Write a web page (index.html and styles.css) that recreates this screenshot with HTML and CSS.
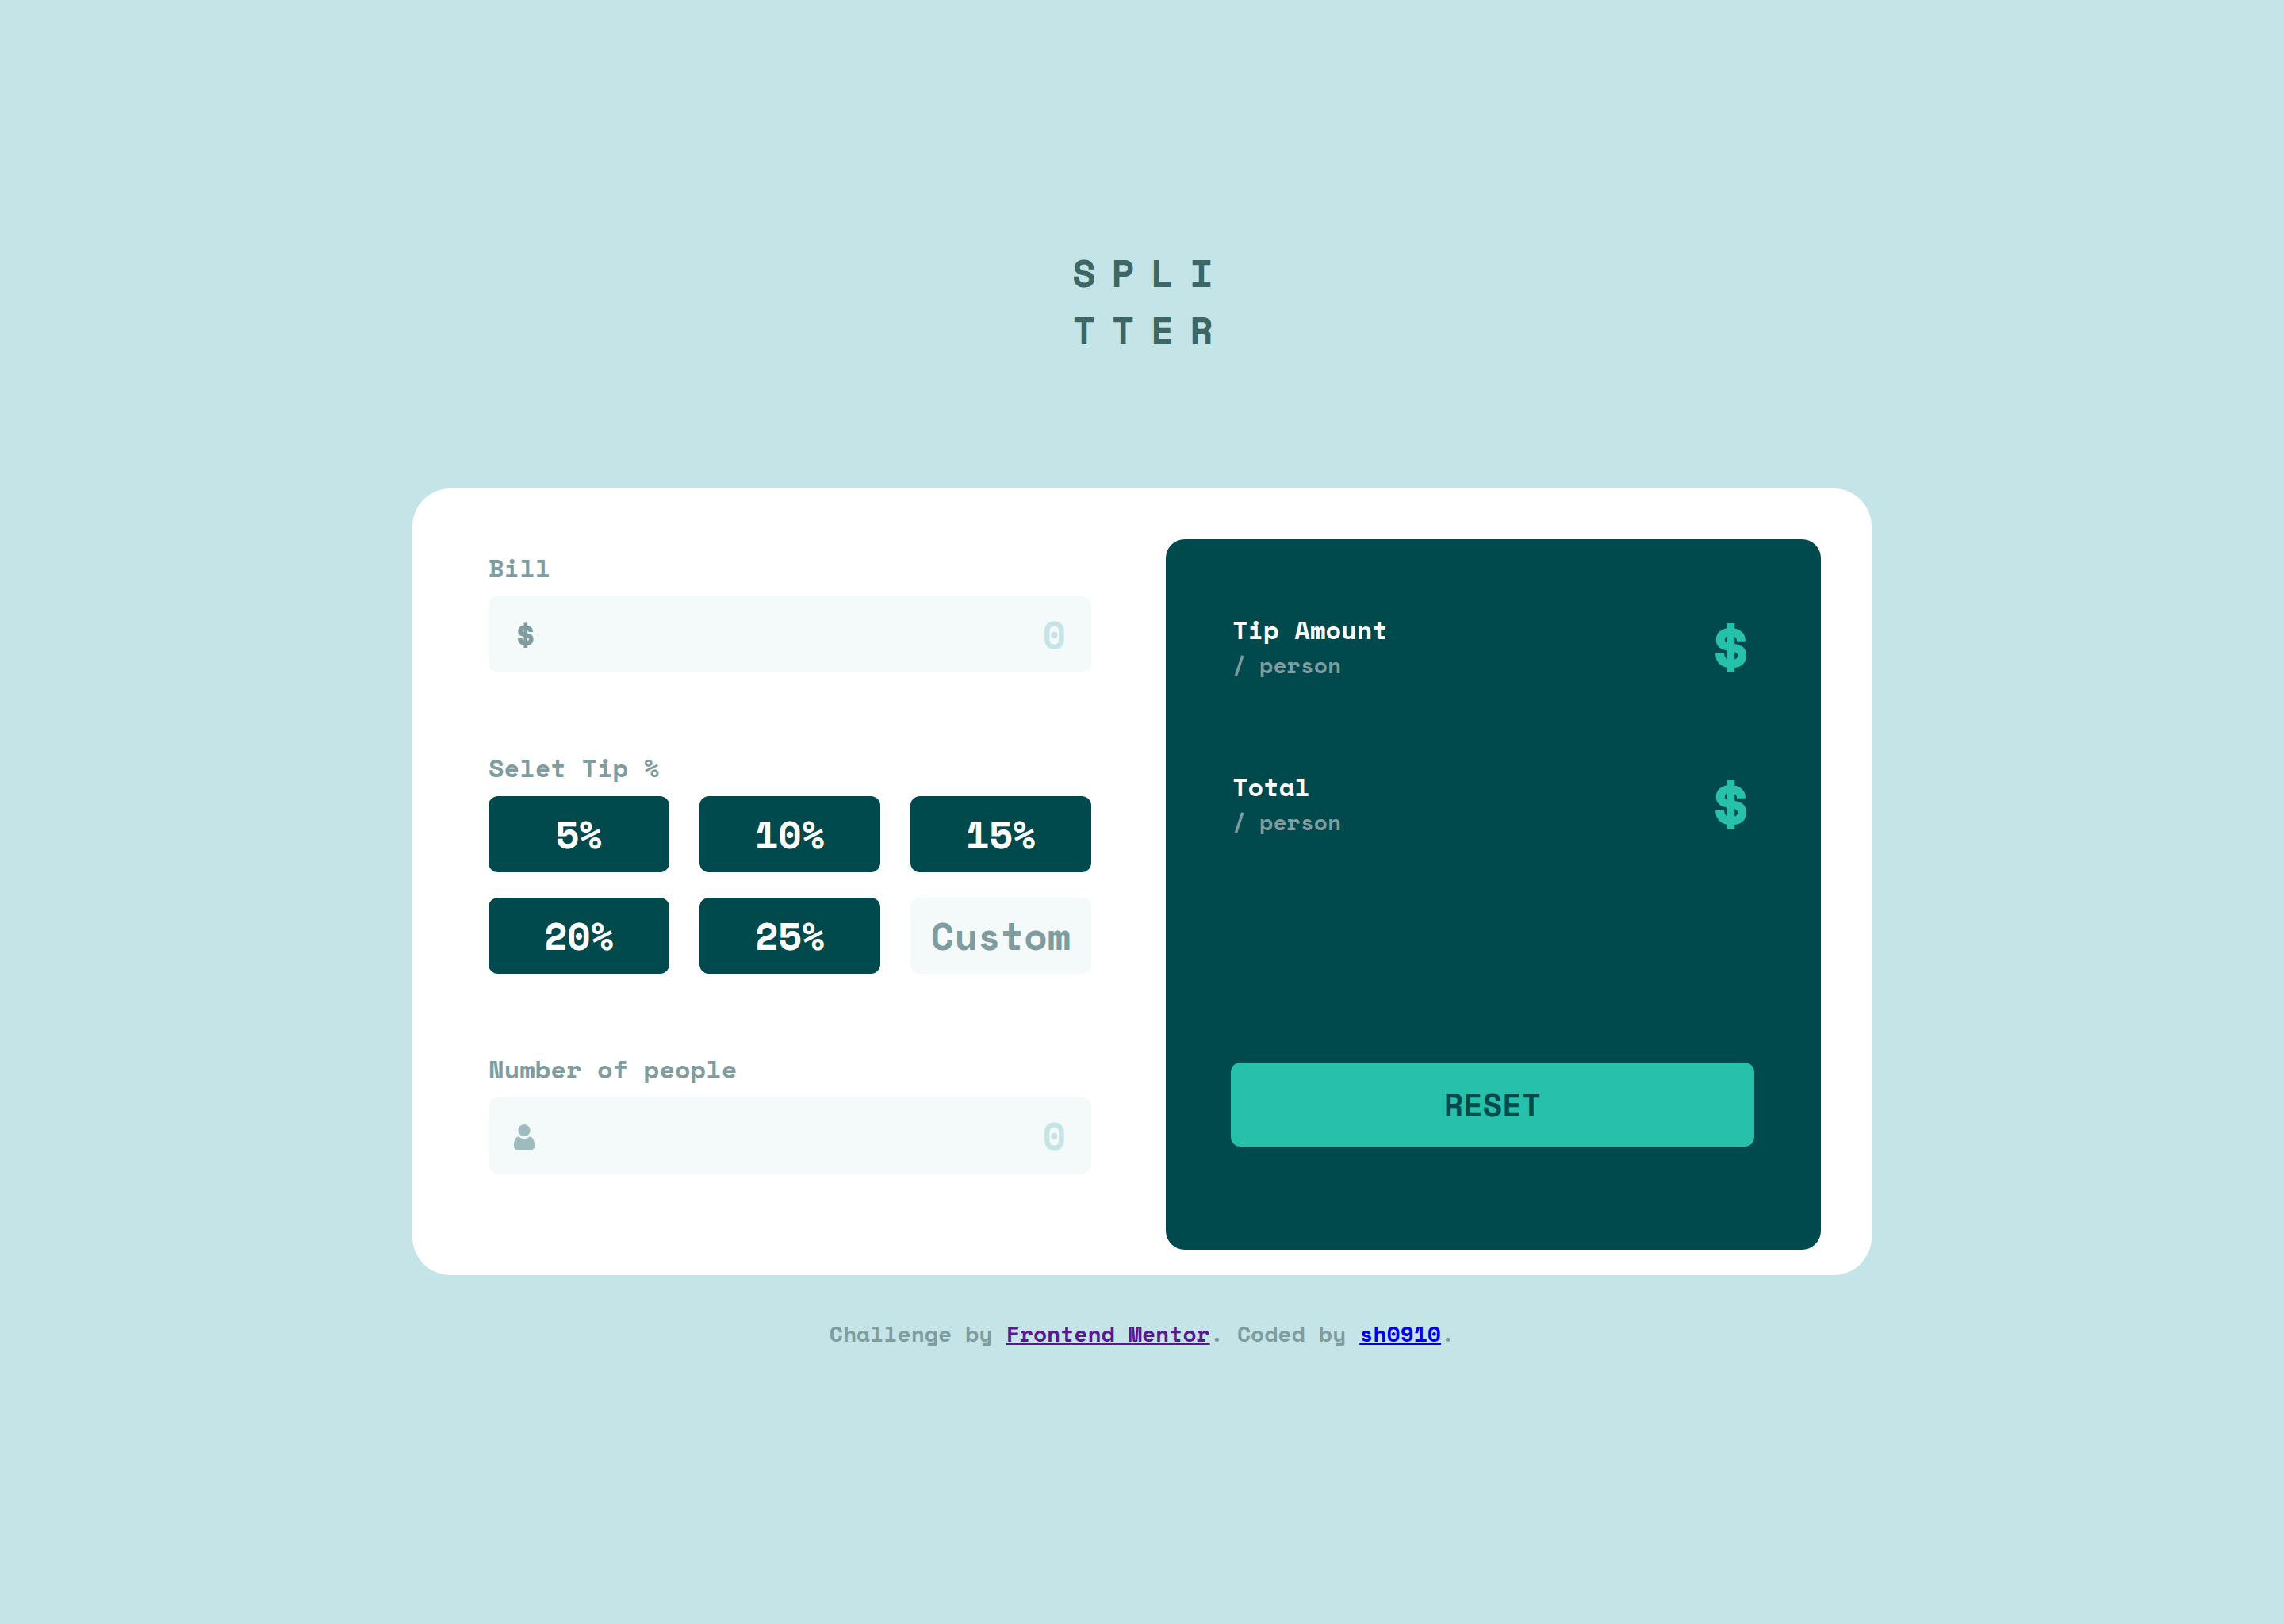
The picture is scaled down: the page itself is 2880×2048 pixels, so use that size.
FILE: index.html
```html
<!DOCTYPE html>
<html lang="en">
<head>
  <meta charset="utf-8">
  <meta name="viewport" content="width=device-width, initial-scale=1">
  <title>Tip calculator</title>
  <link rel="stylesheet" href="styles.css">
</head>
<body class="page">
  <h1 class="logo">SPLI<br>TTER</h1>

  <main class="card">
    <form class="form">
      <div class="group">
        <label class="label" for="bill">Bill</label>
        <div class="field">
          <span class="field-currency" aria-hidden="true">$</span>
          <input class="field-input" id="bill" type="text" inputmode="decimal" placeholder="0">
        </div>
      </div>

      <fieldset class="group">
        <legend class="label">Selet Tip %</legend>
        <div class="tips">
          <button class="tip" type="button">5%</button>
          <button class="tip" type="button">10%</button>
          <button class="tip" type="button">15%</button>
          <button class="tip" type="button">20%</button>
          <button class="tip" type="button">25%</button>
          <input class="tip tip-custom" type="text" inputmode="decimal" placeholder="Custom" aria-label="Custom tip">
        </div>
      </fieldset>

      <div class="group">
        <label class="label" for="people">Number of people</label>
        <div class="field">
          <svg class="field-icon" viewBox="0 0 26 36" aria-hidden="true">
            <circle cx="13" cy="11.600" r="7.600"/>
            <path d="M5.600 19.200C8 20.600 9.500 22.300 13 22.300S18 20.600 20.400 19.200C24.500 20.500 26 25.500 26 31C26 34.500 24.500 36 21.500 36H4.500C1.500 36 0 34.500 0 31C0 25.500 1.500 20.500 5.600 19.200Z"/>
          </svg>
          <input class="field-input" id="people" type="text" inputmode="numeric" placeholder="0">
        </div>
      </div>
    </form>

    <section class="panel">
      <div class="result">
        <div>
          <h2 class="result-title">Tip Amount</h2>
          <p class="result-note">/ person</p>
        </div>
        <output class="amount">$</output>
      </div>
      <div class="result">
        <div>
          <h2 class="result-title">Total</h2>
          <p class="result-note">/ person</p>
        </div>
        <output class="amount">$</output>
      </div>
      <button class="reset" type="button">RESET</button>
    </section>
  </main>

  <footer class="credits">
    Challenge by <a class="link-visited" href="#mentor">Frontend Mentor</a>. Coded by <a class="link" href="#author">sh0910</a>.
  </footer>
</body>
</html>
```
FILE: styles.css
```css
:root {
  --teal-dark: #00494d;
  --teal: #26c0ab;
  --gray: #7f9c9f;
  --pale: #c5e4e7;
  --field: #f4fafa;
}

* {
  box-sizing: border-box;
  margin: 0;
}

.page {
  min-height: 100vh;
  padding: 308px 32px 64px;
  display: flex;
  flex-direction: column;
  align-items: center;
  background: var(--pale);
  color: var(--gray);
  font-family: "Space Mono", "Liberation Mono", monospace;
  font-size: 32px;
  font-weight: 700;
}

.logo {
  margin-bottom: 164px;
  padding-left: 22px;
  color: #3d6666;
  font-size: 48px;
  line-height: 72px;
  letter-spacing: 20px;
}

.card {
  width: 100%;
  max-width: 1840px;
  padding: 64px 64px 32px 96px;
  display: grid;
  grid-template-columns: 760fr 826fr;
  gap: 94px;
  border-radius: 48px;
  background: #fff;
}

.form {
  padding-top: 12px;
  display: flex;
  flex-direction: column;
  gap: 96px;
}

.group {
  min-width: 0;
  padding: 0;
  border: 0;
}

.label {
  display: block;
  padding: 0;
  margin-bottom: 12px;
  line-height: 48px;
}

.field {
  height: 96px;
  padding: 0 32px;
  display: flex;
  align-items: center;
  border-radius: 12px;
  background: var(--field);
}

.field-icon {
  width: 26px;
  height: 36px;
  flex: none;
  fill: #9ebbbd;
}

.field-currency {
  font-size: 48px;
  line-height: 72px;
}

.field-input {
  flex: 1;
  min-width: 0;
  height: 96px;
  padding: 0 0 2px;
  border: 0;
  background: none;
  color: var(--teal-dark);
  font: inherit;
  font-size: 48px;
  text-align: right;
}

.field-input::placeholder {
  color: var(--pale);
  opacity: 1;
}

.tips {
  display: grid;
  grid-template-columns: repeat(3, 1fr);
  gap: 32px 38px;
}

.tip {
  width: 100%;
  min-width: 0;
  height: 96px;
  padding: 0 0 2px;
  border: 0;
  border-radius: 12px;
  background: var(--teal-dark);
  color: #fff;
  font: inherit;
  font-size: 48px;
  text-align: center;
}

.tip-custom {
  background: var(--field);
  color: var(--teal-dark);
}

.tip-custom::placeholder {
  color: var(--gray);
  opacity: 1;
}

.panel {
  padding: 90px 84px 130px 82px;
  display: flex;
  flex-direction: column;
  gap: 108px;
  border-radius: 24px;
  background: var(--teal-dark);
}

.result {
  padding-left: 2px;
  display: flex;
  justify-content: space-between;
  align-items: center;
}

.result-title {
  color: #fff;
  font-size: 32px;
  line-height: 48px;
}

.result-note {
  font-size: 28px;
  line-height: 42px;
}

.amount {
  color: var(--teal);
  font-size: 96px;
  line-height: 90px;
}

.reset {
  height: 106px;
  margin-top: 174px;
  padding: 0 0 2px;
  border: 0;
  border-radius: 12px;
  background: var(--teal);
  color: var(--teal-dark);
  font: inherit;
  font-size: 40px;
}

.credits {
  margin-top: 54px;
  font-size: 28px;
  line-height: 40px;
  text-align: center;
}

.link {
  color: #0000ee;
}

.link-visited {
  color: #551a8b;
}
```
